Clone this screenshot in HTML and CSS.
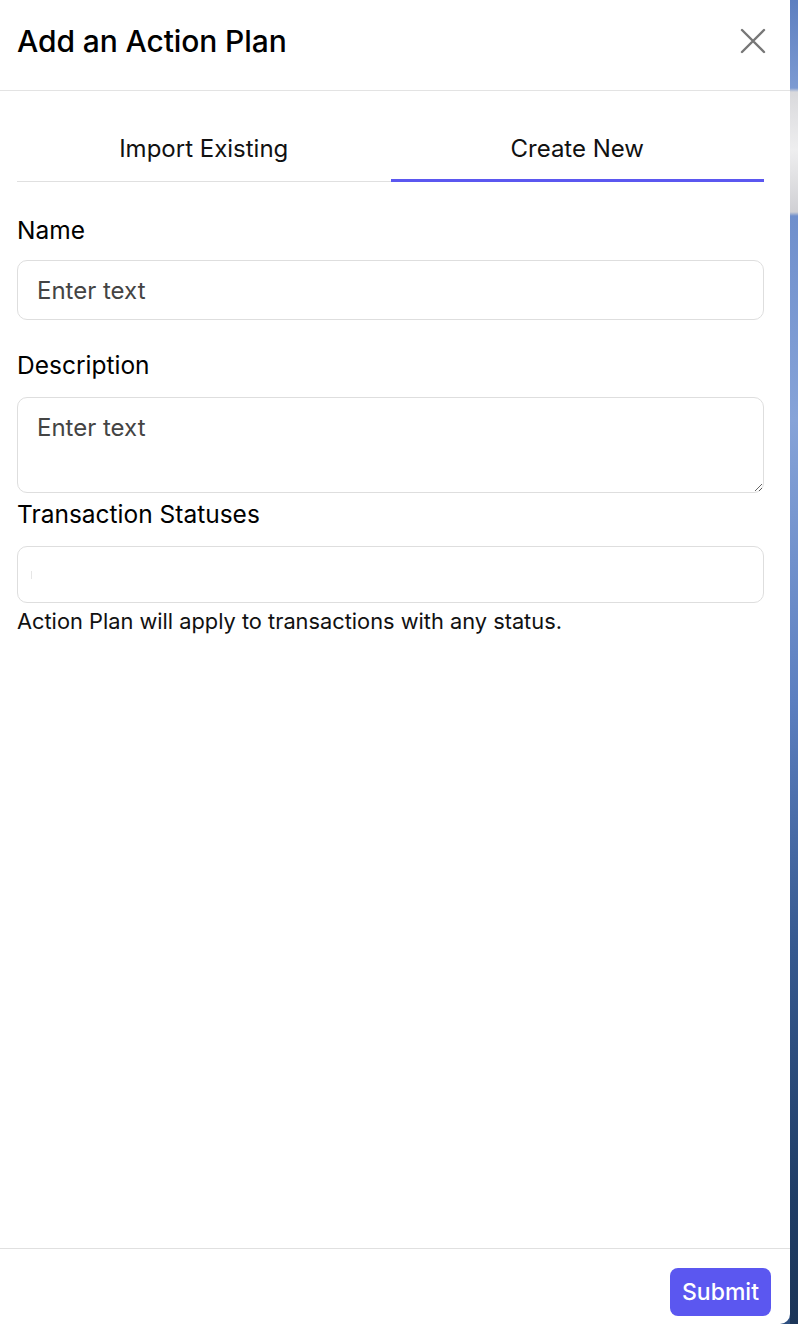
FILE: index.html
```html
<!DOCTYPE html>
<html lang="en">
<head>
    <meta charset="UTF-8">
    <meta name="viewport" content="width=device-width, initial-scale=1.0">
    <title>Add an Action Plan</title>
    <link rel="stylesheet" href="styles.css">
</head>
<body>
    <div class="page">
        <div class="panel">
            <header class="panel-header">
                <h1>Add an Action Plan</h1>
                <button class="close-btn" aria-label="Close">
                    <svg width="26" height="26" viewBox="0 0 26 26">
                        <path d="M2 2 L24 24 M24 2 L2 24" stroke="#777" stroke-width="2.4" fill="none" stroke-linecap="round"/>
                    </svg>
                </button>
            </header>

            <div class="panel-body">
                <div class="tabs">
                    <div class="tab">Import Existing</div>
                    <div class="tab active">Create New</div>
                </div>

                <label class="field-label">Name</label>
                <input class="field-input" type="text" placeholder="Enter text">

                <label class="field-label label-desc">Description</label>
                <textarea class="field-input field-textarea" placeholder="Enter text"></textarea>

                <label class="field-label label-status">Transaction Statuses</label>
                <div class="field-input field-select"><span class="caret"></span></div>
                <p class="help-text">Action Plan will apply to transactions with any status.</p>
            </div>

            <footer class="panel-footer">
                <button class="submit-btn">Submit</button>
            </footer>
        </div>
        <div class="backdrop"></div>
    </div>
</body>
</html>
```

FILE: styles.css
```css
/* Reset */
body, h1, p {
    margin: 0;
    padding: 0;
}

body {
    font-family: Inter, "Noto Sans", Arial, sans-serif;
    color: #000;
    background-color: #2d4f80;
}

.page {
    display: flex;
    height: 1324px;
}

/* Side panel */
.panel {
    width: 790px;
    background-color: #fff;
    display: flex;
    flex-direction: column;
    border-bottom-right-radius: 10px;
}

.backdrop {
    flex: 1;
    background: linear-gradient(to bottom,
        #5d7fc0 0, #7c9ad2 88px,
        #d9d9dc 92px, #eeeeef 150px, #d0d0d4 212px,
        #6f8fcc 216px, #86a3d8 420px, #5c7fc0 700px,
        #36598f 950px, #1f3d66 1200px, #1c3558 1324px);
}

/* Header */
.panel-header {
    height: 90px;
    border-bottom: 1px solid #e3e3e3;
    display: flex;
    align-items: center;
    justify-content: space-between;
    padding: 0 24px 0 17px;
}

.panel-header h1 {
    font-size: 30px;
    font-weight: 500;
    letter-spacing: -0.1px;
    margin-top: -9px;
}

.close-btn {
    background: none;
    border: none;
    padding: 0;
    margin-top: -9px;
    cursor: pointer;
    display: flex;
}

/* Body */
.panel-body {
    flex: 1;
    padding: 27px 26px 0 17px;
    display: flex;
    flex-direction: column;
}

.tabs {
    display: flex;
    align-items: flex-start;
    margin-bottom: 33px;
}

.tab {
    flex: 1;
    text-align: center;
    font-size: 24px;
    line-height: 30px;
    padding: 16px 0 17px;
    border-bottom: 1px solid #e0e0e0;
    color: #111;
}

.tab.active {
    padding-bottom: 15px;
    border-bottom: 3px solid #5b57f0;
}

.field-label {
    font-size: 24.5px;
    line-height: 30px;
    color: #000;
    margin-bottom: 15px;
}

.label-desc {
    margin-top: 30px;
    margin-bottom: 17px;
}

.label-status {
    margin-top: 6px;
    margin-bottom: 17px;
}

.field-input {
    box-sizing: border-box;
    width: 100%;
    height: 60px;
    border: 1px solid #dedede;
    border-radius: 10px;
    padding: 0 19px;
    font-family: inherit;
    font-size: 24px;
    color: #333;
    background-color: #fff;
    outline: none;
}

.field-input::placeholder {
    color: #444;
}

.field-textarea {
    height: 96px;
    padding-top: 15px;
    line-height: 30px;
    resize: vertical;
}

.field-select {
    height: 57px;
    display: flex;
    align-items: center;
    padding: 0 13px;
}

.caret {
    width: 1px;
    height: 8px;
    background-color: #e6e6e6;
}

.help-text {
    font-size: 21.8px;
    line-height: 26px;
    margin-top: 5px;
    color: #111;
}

/* Footer */
.panel-footer {
    border-top: 1px solid #e0e0e0;
    display: flex;
    justify-content: flex-end;
    padding: 19px 19px 8px;
}

.submit-btn {
    background-color: #5b57f0;
    color: #fff;
    border: none;
    border-radius: 8px;
    width: 101px;
    height: 48px;
    font-family: inherit;
    font-size: 23px;
    font-weight: 500;
    cursor: pointer;
}
```
